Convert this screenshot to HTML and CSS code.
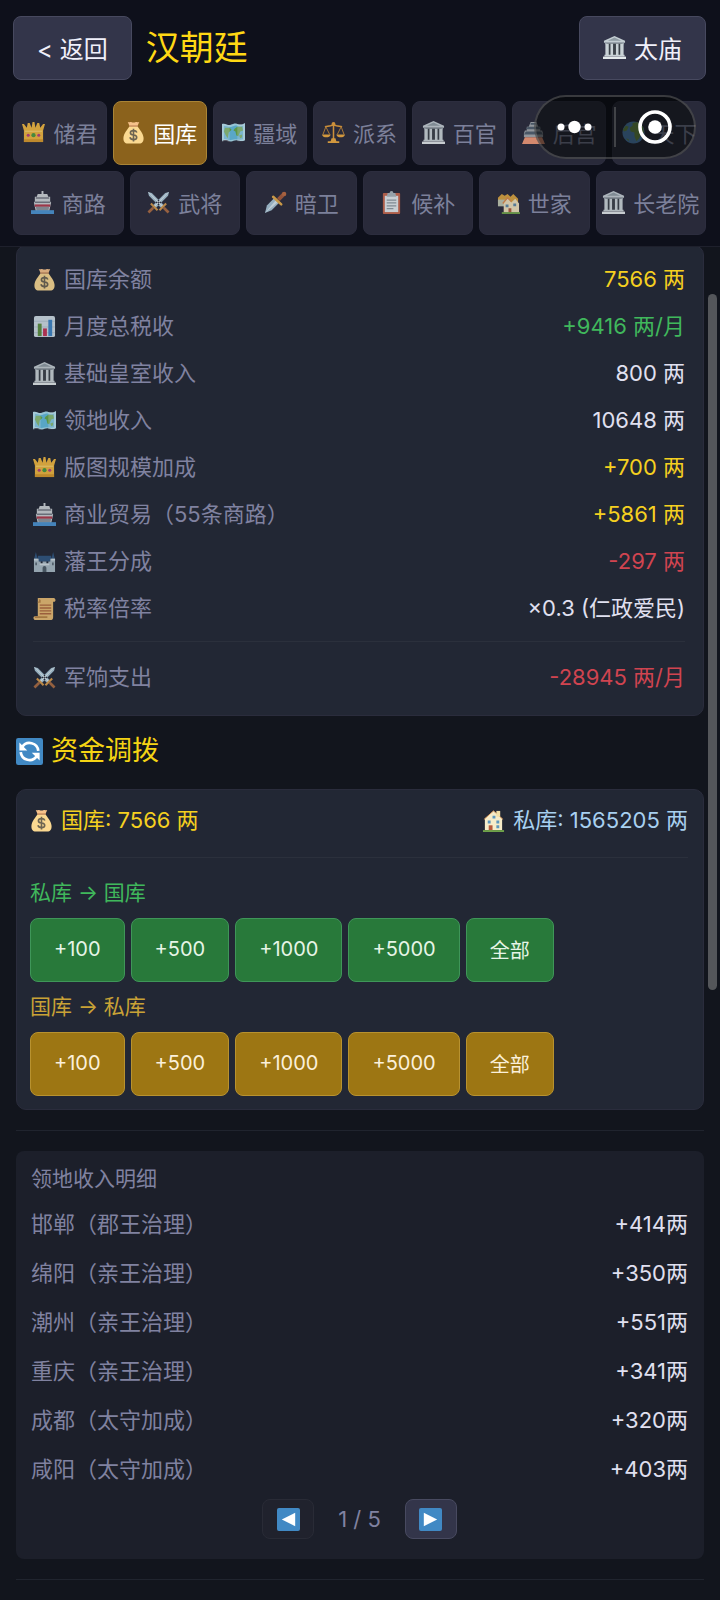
FILE: index.html
```html
<!DOCTYPE html>
<html lang="zh-CN">
<head>
  <meta charset="UTF-8">
  <meta name="viewport" content="width=device-width, initial-scale=1.0">
  <title>汉朝廷</title>
  <link rel="stylesheet" href="styles.css">
</head>
<body>
<svg class="sprite" aria-hidden="true">
  <symbol id="i-crown" viewBox="0 0 24 24">
    <path fill="#f0b73f" d="M2 22V10L0 3h2l3 4 1-5h2l2 5 1-6h2l1 6 2-5h2l1 5 3-4h2l-2 7v12z"/>
    <path fill="#d99a2b" d="M2 19h20v3H2z"/>
    <path fill="#f7cf66" d="M3 10h18v1.500H3z"/>
    <circle cx="12" cy="14.800" r="2.200" fill="#4b9b3f"/>
    <circle cx="6.500" cy="14.800" r="1.600" fill="#b8417f"/>
    <circle cx="17.500" cy="14.800" r="1.600" fill="#b8417f"/>
  </symbol>
  <symbol id="i-bag" viewBox="0 0 24 24">
    <path fill="#fbd991" d="M8 5.500h8c2 3 6 7 6.500 12 .3 4-1.500 6-4.500 6H6c-3 0-4.800-2-4.500-6C2 12.500 6 8.500 8 5.500z"/>
    <path fill="#f6c28a" d="M6 1c2 .8 3 0 4 .2 1.300.4 2.700.4 4 0 1-.2 2 .6 4-.2l-2 4.500H8z"/>
    <path fill="#c98d5e" d="M7.500 4.500h9v1.400h-9z"/>
    <path fill="none" stroke="#6c6452" stroke-width="1.700" d="M15.500 12c-.6-1.600-1.900-2-3.500-2-4.300 0-4.300 4.300 0 4.600 4.600.2 4.300 4.900 0 4.900-2 0-3.300-.8-3.700-2.500M12 8v13.500"/>
  </symbol>
  <symbol id="i-map" viewBox="0 0 24 24">
    <path fill="#a9dff0" d="M0 3c4-1 6 2 9 1s4-2 7-1 5 1 8-1v18c-4 2-6 0-9 0s-4 2-7 1-5-2-8 0z"/>
    <path fill="#62bde0" d="M2 5c3 0 5 2 8 1s4-2 6-1 4 1 6 0v14c-3 1-5 0-8 0s-4 1-6 1-4-2-6-1z"/>
    <path fill="#64a94b" d="M3 7l5 0 2 2-3 3-1 6-2-3-2-4zM13 8l3-2 5 0 1 4-3 1-2 5-2-1-1-4-2-1zM18 15l3-1v3l-2 1z"/>
    <path fill="#fff" opacity=".25" d="M0 3c4-1 6 2 8 1v18c-3-1-5-2-8 0zM16 3c2 0 5 1 8-1v18c-4 2-6 1-8 1z"/>
  </symbol>
  <symbol id="i-scales" viewBox="0 0 24 24">
    <path fill="none" stroke="#e9a23b" stroke-width="1.600" d="M12 2v19M3 6l6-1 3-1 3 1 6 1"/>
    <path fill="none" stroke="#c58a38" stroke-width="1" d="M4 6L1 14M4 6l4 8M20 6l-4 8M20 6l3 8"/>
    <path fill="#f0ac3f" d="M0 14h9c-.5 4-8.500 4-9 0zM15 14h9c-.5 4-8.500 4-9 0zM10 18h4l1 3h3v2H6v-2h3z"/>
    <circle cx="12" cy="3" r="2" fill="#e9a23b"/>
  </symbol>
  <symbol id="i-bank" viewBox="0 0 24 24">
    <path fill="#c3cdd2" d="M12 0l11 5v2H1V5z"/>
    <path fill="#8f9ba3" d="M12 1.500L5 5h14zM2 7h20v1.500H2z"/>
    <path fill="#3a4148" d="M4 8h16v12H4z"/>
    <path fill="#c9d2d6" d="M2.500 8h3.500v12H2.500zM7.800 8h2.700v12H7.800zM13.500 8h2.700v12h-2.700zM18 8h3.500v12H18zM1.500 19.500h21v2h-21z"/>
    <path fill="#e3e9eb" d="M0 21.500h24V24H0z"/>
  </symbol>
  <symbol id="i-pagoda" viewBox="0 0 24 24">
    <path fill="#a2a8ad" d="M9 1h6l2 5h2v4h2l1 3v4H2v-4l1-3h2V6h2z"/>
    <path fill="#50606e" d="M6 6h12l2 2.500H4zM4 11h16l2 3H2zM9 2h6v2H9z"/>
    <path fill="#f29a78" d="M3 17h18l3 7H0z"/>
  </symbol>
  <symbol id="i-globe" viewBox="0 0 24 24">
    <circle cx="12" cy="12" r="11.500" fill="#5d9fdb"/>
    <path fill="#79a94e" d="M11 2l5-1 6 5 1 6-3 1-2 5-3 3-2-5 0-4-4-1-1-4 3-2zM1 9l3-4 3 1-2 4-3 1zM4 18l3 1 0 2z"/>
  </symbol>
  <symbol id="i-ship" viewBox="0 0 24 24">
    <path fill="#cdd2d6" d="M11 0h2v3h4l1 3h2v5l1 1-2 9H5L3 12l1-1V6h2l1-3h4z"/>
    <path fill="#757b84" d="M5 6.500h14V8H5zM4 11h16v1.500H4z"/>
    <path fill="#b23a4c" d="M4 14h16v2.500H4z"/>
    <path fill="#8d969e" d="M5 16.500h14l-1 4H6z"/>
    <path fill="#4b94d2" d="M0 20h24v4H0z"/>
  </symbol>
  <symbol id="i-swords" viewBox="0 0 24 24">
    <path fill="#a9c6d6" d="M1 1l4 1 13 13-3 3L2 5zM23 1l-4 1L6 15l3 3L22 5z"/>
    <path fill="#e0edf2" d="M1 1l2 1 14 14-1 1zM23 1l-2 1L7 16l1 1z"/>
    <path fill="none" stroke="#d59a4c" stroke-width="2.200" d="M13 20l7-7M11 20l-7-7"/>
    <path fill="none" stroke="#a96a42" stroke-width="2.800" d="M17.500 17.500l5 5M6.500 17.500l-5 5"/>
  </symbol>
  <symbol id="i-dagger" viewBox="0 0 24 24">
    <path fill="#a9c7d8" d="M1 23l2-8 8-8 5 5-8 8z"/>
    <path fill="#dcebf2" d="M1 23l11-13 2 2z"/>
    <path fill="none" stroke="#e4ac4a" stroke-width="2.600" stroke-linecap="round" d="M9.500 6l8.500 8"/>
    <path fill="none" stroke="#a55b3b" stroke-width="4" d="M15 9l6-6"/>
    <circle cx="21" cy="3" r="2.300" fill="#bc6b41"/>
  </symbol>
  <symbol id="i-clip" viewBox="0 0 24 24">
    <rect x="3" y="2" width="18" height="22" rx="1" fill="#c5674c"/>
    <path fill="#e4ebee" d="M5 5h14v17H5z"/>
    <path fill="#a9b6bd" d="M8 2h2a2 2 0 0 1 4 0h2l1 4H7z"/>
    <path stroke="#8e9ba3" stroke-width="1.300" d="M7 9.500h10M7 12.500h10M7 15.500h10M7 18.500h7"/>
  </symbol>
  <symbol id="i-houses" viewBox="0 0 24 24">
    <path fill="#d9a33f" d="M1 7l4-4 3 2 3-2 3 3 3-3 5 5v5H1z"/>
    <path fill="#bfc7b0" d="M1 9h9v7H1z"/>
    <path fill="#efe2bd" d="M7 12l4-5 4 5 4-4 4 5v10H7z"/>
    <path fill="none" stroke="#dc8b4b" stroke-width="1.400" d="M6 13l5-6 4 4"/>
    <path fill="#5e8aa8" d="M9 14h3v3H9zM17 13h3v3h-3z"/>
    <path fill="#ad5a3c" d="M12 18h3v5h-3z"/>
    <path fill="#6fa24a" d="M5 22h19v2H5z"/>
  </symbol>
  <symbol id="i-chart" viewBox="0 0 24 24">
    <rect x="1" y="1" width="22" height="22" rx="2" fill="#cfdde5"/>
    <path stroke="#b3c6d1" d="M1 6.500h22M1 12.500h22M1 18.500h22"/>
    <path fill="#5c8f41" d="M5 9h4v13H5z"/>
    <path fill="#c33356" d="M10.500 14h4v8h-4z"/>
    <path fill="#3f85c6" d="M16 5h4v17h-4z"/>
  </symbol>
  <symbol id="i-castle" viewBox="0 0 24 24">
    <path fill="#2f557e" d="M3 2l2 8H1zM21 2l2 8h-4zM5 6h14v6H5z"/>
    <path fill="#a9bac5" d="M1 9h5v3h2v2h2v-2h4v2h2v-2h2V9h5v14H1z"/>
    <path fill="#d3dee3" d="M1 9h4v2H1zM19 9h4v2h-4zM7 14h10v2H7z"/>
    <path fill="#4d5c68" d="M10 23v-4c0-3 4-3 4 0v4zM2.500 13h1.500v3H2.500zM20 13h1.500v3H20z"/>
  </symbol>
  <symbol id="i-scroll" viewBox="0 0 24 24">
    <path fill="#e8bc73" d="M5 1h17c2 1 2 4 0 4h-1v16c0 2-1 3-3 3H2c-2-1-2-4 0-4h3z"/>
    <path fill="#b98545" d="M5 1c2 0 2 4 0 4v1h3V3zM2 20h13v2H2z"/>
    <path stroke="#b0683f" stroke-width="1.500" d="M7 8.500h12M7 11.500h12M7 14.500h12M7 17.500h12"/>
  </symbol>
  <symbol id="i-refresh" viewBox="0 0 24 24">
    <rect width="24" height="24" rx="2" fill="#4189c4"/>
    <path fill="none" stroke="#fff" stroke-width="2.400" d="M5.500 8a7.800 7.800 0 0 1 14.300 3.500M18.500 16A7.800 7.800 0 0 1 4.200 12.500"/>
    <path fill="#fff" d="M3 4v7h7zM21 20v-7h-7z"/>
  </symbol>
  <symbol id="i-house" viewBox="0 0 24 24">
    <path fill="#f6ecc9" d="M3 10l9-8 9 8v12H3z"/>
    <path fill="none" stroke="#e2a060" stroke-width="1" d="M2 11l10-9 10 9"/>
    <path fill="#f3dfa6" d="M15 2h4v6h-4z"/>
    <path fill="#5c97bd" d="M6 12h3v3H6zM15 12h3v3h-3zM15 17h3v3h-3zM11 7h3v3h-3z"/>
    <path fill="#b6593b" d="M7 17h4v6H7z"/>
    <path fill="#6fa24a" d="M1 22h22v2H1z"/>
  </symbol>
  <symbol id="i-prev" viewBox="0 0 24 24">
    <rect width="24" height="24" rx="2" fill="#4189c4"/>
    <path fill="#fff" d="M5 12l14-7v14z"/>
  </symbol>
  <symbol id="i-next" viewBox="0 0 24 24">
    <rect width="24" height="24" rx="2" fill="#4189c4"/>
    <path fill="#fff" d="M19 12L5 5v14z"/>
  </symbol>
</svg>

<header class="header">
  <div class="top-bar">
    <button class="btn">&lt; 返回</button>
    <h1 class="page-title">汉朝廷</h1>
    <button class="btn"><svg class="icon"><use href="#i-bank"/></svg>太庙</button>
  </div>
  <nav class="tabs">
    <div class="tab-row">
      <button class="tab"><svg class="icon"><use href="#i-crown"/></svg>储君</button>
      <button class="tab active"><svg class="icon"><use href="#i-bag"/></svg>国库</button>
      <button class="tab"><svg class="icon"><use href="#i-map"/></svg>疆域</button>
      <button class="tab"><svg class="icon"><use href="#i-scales"/></svg>派系</button>
      <button class="tab"><svg class="icon"><use href="#i-bank"/></svg>百官</button>
      <button class="tab"><svg class="icon"><use href="#i-pagoda"/></svg>后宫</button>
      <button class="tab"><svg class="icon"><use href="#i-globe"/></svg>天下</button>
    </div>
    <div class="tab-row">
      <button class="tab"><svg class="icon"><use href="#i-ship"/></svg>商路</button>
      <button class="tab"><svg class="icon"><use href="#i-swords"/></svg>武将</button>
      <button class="tab"><svg class="icon"><use href="#i-dagger"/></svg>暗卫</button>
      <button class="tab"><svg class="icon"><use href="#i-clip"/></svg>候补</button>
      <button class="tab"><svg class="icon"><use href="#i-houses"/></svg>世家</button>
      <button class="tab"><svg class="icon"><use href="#i-bank"/></svg>长老院</button>
    </div>
  </nav>
  <div class="capsule">
    <button class="capsule-btn" aria-label="更多">
      <svg width="36" height="14" viewBox="0 0 36 14" fill="#fff"><circle cx="4" cy="7" r="3.500"/><circle cx="17.500" cy="7" r="6.200"/><circle cx="31" cy="7" r="3.500"/></svg>
    </button>
    <button class="capsule-btn" aria-label="关闭">
      <svg width="34" height="34" viewBox="0 0 34 34"><circle cx="17" cy="17" r="15" fill="none" stroke="#fff" stroke-width="3.600"/><circle cx="17" cy="17" r="6.800" fill="#fff"/></svg>
    </button>
  </div>
</header>

<main class="content">
  <section class="panel summary">
    <dl class="rows">
      <div class="row"><dt><svg class="icon"><use href="#i-bag"/></svg>国库余额</dt><dd class="gold">7566 两</dd></div>
      <div class="row"><dt><svg class="icon"><use href="#i-chart"/></svg>月度总税收</dt><dd class="green">+9416 两/月</dd></div>
      <div class="row"><dt><svg class="icon"><use href="#i-bank"/></svg>基础皇室收入</dt><dd>800 两</dd></div>
      <div class="row"><dt><svg class="icon"><use href="#i-map"/></svg>领地收入</dt><dd>10648 两</dd></div>
      <div class="row"><dt><svg class="icon"><use href="#i-crown"/></svg>版图规模加成</dt><dd class="gold">+700 两</dd></div>
      <div class="row"><dt><svg class="icon"><use href="#i-ship"/></svg>商业贸易（55条商路）</dt><dd class="gold">+5861 两</dd></div>
      <div class="row"><dt><svg class="icon"><use href="#i-castle"/></svg>藩王分成</dt><dd class="red">-297 两</dd></div>
      <div class="row"><dt><svg class="icon"><use href="#i-scroll"/></svg>税率倍率</dt><dd>×0.3 (仁政爱民)</dd></div>
      <div class="row expense"><dt><svg class="icon"><use href="#i-swords"/></svg>军饷支出</dt><dd class="red">-28945 两/月</dd></div>
    </dl>
  </section>

  <h2 class="section-title"><svg class="icon"><use href="#i-refresh"/></svg>资金调拨</h2>

  <section class="panel transfer">
    <div class="balances">
      <span class="balance gold"><svg class="icon"><use href="#i-bag"/></svg>国库: 7566 两</span>
      <span class="balance blue"><svg class="icon"><use href="#i-house"/></svg>私库: 1565205 两</span>
    </div>
    <h3 class="transfer-label green">私库 → 国库</h3>
    <div class="amounts deposit">
      <button>+100</button>
      <button>+500</button>
      <button>+1000</button>
      <button>+5000</button>
      <button>全部</button>
    </div>
    <h3 class="transfer-label amber">国库 → 私库</h3>
    <div class="amounts withdraw">
      <button>+100</button>
      <button>+500</button>
      <button>+1000</button>
      <button>+5000</button>
      <button>全部</button>
    </div>
  </section>

  <hr class="divider">

  <section class="detail">
    <h3 class="detail-title">领地收入明细</h3>
    <dl class="rows">
      <div class="row"><dt>邯郸（郡王治理）</dt><dd>+414两</dd></div>
      <div class="row"><dt>绵阳（亲王治理）</dt><dd>+350两</dd></div>
      <div class="row"><dt>潮州（亲王治理）</dt><dd>+551两</dd></div>
      <div class="row"><dt>重庆（亲王治理）</dt><dd>+341两</dd></div>
      <div class="row"><dt>成都（太守加成）</dt><dd>+320两</dd></div>
      <div class="row"><dt>咸阳（太守加成）</dt><dd>+403两</dd></div>
    </dl>
    <div class="pager">
      <button class="page-btn" aria-label="上一页" disabled><svg class="icon"><use href="#i-prev"/></svg></button>
      <span>1 / 5</span>
      <button class="page-btn" aria-label="下一页"><svg class="icon"><use href="#i-next"/></svg></button>
    </div>
  </section>

  <hr class="divider">
  <div class="scroll-thumb"></div>
</main>
</body>
</html>
```
FILE: styles.css
```css
* {
  margin: 0;
  padding: 0;
  box-sizing: border-box;
}

body {
  min-height: 100vh;
  background-color: #12151d;
  color: #e0e0f0;
  font-family: Inter, "Noto Sans CJK SC", sans-serif;
  font-size: 22px;
}

button {
  font-family: inherit;
  cursor: pointer;
}

h1, h2, h3 {
  font-weight: 400;
}

.sprite {
  position: absolute;
  width: 0;
  height: 0;
}

.icon {
  width: 23px;
  height: 23px;
  flex: none;
}

.gold { color: #f5d020; }
.green { color: #40b85c; }
.red { color: #d04450; }
.blue { color: #a8d0f0; }
.amber { color: #c9a236; }

/* Header */
.header {
  position: relative;
  padding: 16px 14px 11px 13px;
  background-color: #0e101b;
  border-bottom: 1px solid #1e202c;
}

.top-bar {
  display: flex;
  align-items: center;
  gap: 14px;
  margin-bottom: 21px;
}

.page-title {
  flex: 1;
  font-size: 34px;
  line-height: 48px;
  color: #ffd814;
}

.btn {
  display: flex;
  align-items: center;
  gap: 8px;
  height: 64px;
  padding: 0 23px 2px;
  border: 1px solid #47495f;
  border-radius: 8px;
  background-color: #33354a;
  color: #f0f0fa;
  font-size: 24px;
}

.tabs {
  display: flex;
  flex-direction: column;
  gap: 6px;
}

.tab-row {
  display: flex;
  gap: 6px;
}

.tab {
  display: flex;
  flex: 1 1 0;
  align-items: center;
  justify-content: center;
  gap: 8px;
  height: 64px;
  padding-bottom: 2px;
  border: 1px solid #2c2d3e;
  border-radius: 8px;
  background-color: #292a3a;
  color: #7c809a;
  font-size: 22px;
  white-space: nowrap;
}

.tab .icon {
  opacity: 0.85;
}

.tab.active {
  border-color: #a98436;
  background-color: #8b621c;
  color: #fff;
}

.tab.active .icon {
  opacity: 1;
}

/* Floating host menu */
.capsule {
  position: absolute;
  top: 95px;
  right: 24px;
  display: flex;
  width: 162px;
  height: 64px;
  border: 2px solid rgba(150, 150, 150, 0.35);
  border-radius: 32px;
  background-color: rgba(5, 7, 7, 0.55);
}

.capsule-btn {
  display: flex;
  flex: 1;
  align-items: center;
  justify-content: center;
  border: none;
  background: none;
}

.capsule-btn + .capsule-btn {
  margin: 10px 0;
  border-left: 2px solid rgba(150, 150, 150, 0.35);
}

/* Content */
.content {
  position: relative;
  padding: 0 16px;
  overflow: hidden;
}

.panel {
  border: 1px solid #2a2c3c;
  border-radius: 10px;
  background-color: #222734;
}

.row {
  display: flex;
  justify-content: space-between;
  line-height: 47px;
}

.row dt {
  display: flex;
  align-items: center;
  gap: 8px;
  color: #8082a0;
}

.row dt .icon {
  opacity: 0.85;
}

.summary {
  margin-top: -2px;
  padding: 10px 18px 14px 16px;
}

.expense {
  margin-top: 9px;
  padding-top: 12px;
  border-top: 1px solid #2b303c;
}

.section-title {
  display: flex;
  align-items: center;
  gap: 8px;
  margin: 15px 0 18px;
  font-size: 27px;
  line-height: 40px;
  color: #f5d414;
}

.section-title .icon {
  width: 27px;
  height: 27px;
}

.transfer {
  padding: 10px 15px 13px 13px;
}

.balances {
  display: flex;
  justify-content: space-between;
  padding-bottom: 17px;
  margin-bottom: 20px;
  border-bottom: 1px solid #2b303c;
  line-height: 40px;
}

.balance {
  display: flex;
  align-items: center;
  gap: 8px;
}

.transfer-label {
  margin: 10px 0;
  font-size: 21px;
  line-height: 30px;
}

.amounts {
  display: flex;
  gap: 6px;
}

.amounts button {
  height: 64px;
  padding: 0 23px 2px;
  border: 1px solid #3f9659;
  border-radius: 8px;
  background-color: #28793a;
  color: #e6f5e6;
  font-size: 20px;
}

.amounts.withdraw button {
  border-color: #b8922f;
  background-color: #9d7613;
  color: #fbf0da;
}

.divider {
  margin: 20px 0;
  border: none;
  border-top: 1px solid #20242e;
}

.detail {
  padding: 13px 16px 20px 15px;
  border-radius: 8px;
  background-color: #1c1f2a;
}

.detail-title {
  margin-bottom: 6px;
  font-size: 21px;
  line-height: 30px;
  color: #8082a0;
}

.detail .row {
  line-height: 49px;
}

.pager {
  display: flex;
  align-items: center;
  justify-content: center;
  gap: 24px;
  margin-top: 5px;
  color: #8082a0;
}

.page-btn {
  display: flex;
  align-items: center;
  justify-content: center;
  width: 52px;
  height: 40px;
  border: 1px solid #484a60;
  border-radius: 8px;
  background-color: #33354a;
}

.page-btn:disabled {
  border-color: #292b36;
  background-color: #20222d;
}

.scroll-thumb {
  position: absolute;
  top: 47px;
  right: 3px;
  width: 9px;
  height: 696px;
  border-radius: 5px;
  background-color: #54565a;
}
```
